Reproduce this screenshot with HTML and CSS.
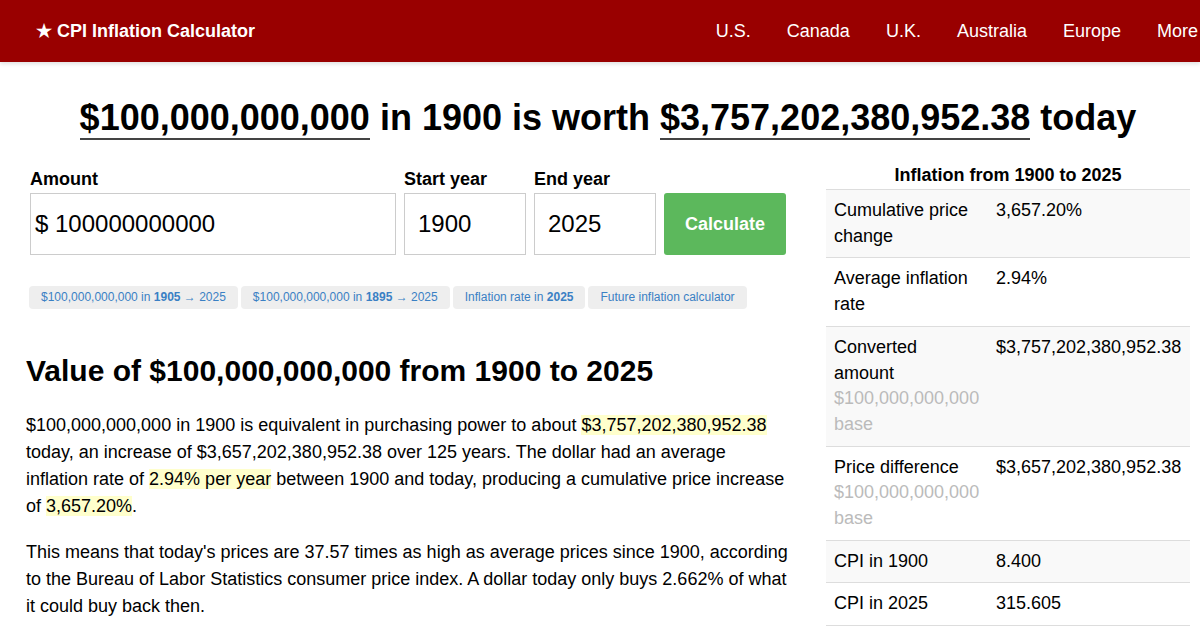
FILE: index.html
```html
<!DOCTYPE html>
<html lang="en">
<head>
<meta charset="utf-8">
<title>CPI Inflation Calculator</title>
<link rel="stylesheet" href="styles.css">
</head>
<body>
<header class="topbar">
  <a class="brand" href="#">★ CPI Inflation Calculator</a>
  <nav class="nav">
    <a href="#">U.S.</a>
    <a href="#">Canada</a>
    <a href="#">U.K.</a>
    <a href="#">Australia</a>
    <a href="#">Europe</a>
    <a href="#">More</a>
  </nav>
</header>

<h1 class="headline"><span class="ul">$100,000,000,000</span> in 1900 is worth <span class="ul">$3,757,202,380,952.38</span> today</h1>

<div class="page">
  <main class="main">
    <form class="calc">
      <div class="field field-amount">
        <label>Amount</label>
        <div class="box">$ 100000000000</div>
      </div>
      <div class="field field-year">
        <label>Start year</label>
        <div class="box">1900</div>
      </div>
      <div class="field field-year">
        <label>End year</label>
        <div class="box">2025</div>
      </div>
      <div class="field field-btn">
        <label>&nbsp;</label>
        <button type="button" class="btn">Calculate</button>
      </div>
    </form>

    <div class="chips">
      <a class="chip" href="#">$100,000,000,000 in <b>1905</b> → 2025</a>
      <a class="chip" href="#">$100,000,000,000 in <b>1895</b> → 2025</a>
      <a class="chip" href="#">Inflation rate in <b>2025</b></a>
      <a class="chip" href="#">Future inflation calculator</a>
    </div>

    <h2 class="section-title">Value of $100,000,000,000 from 1900 to 2025</h2>
    <p class="text">$100,000,000,000 in 1900 is equivalent in purchasing power to about <span class="hl">$3,757,202,380,952.38</span> today, an increase of $3,657,202,380,952.38 over 125 years. The dollar had an average inflation rate of <span class="hl">2.94% per year</span> between 1900 and today, producing a cumulative price increase of <span class="hl">3,657.20%</span>.</p>
    <p class="text">This means that today's prices are 37.57 times as high as average prices since 1900, according to the Bureau of Labor Statistics consumer price index. A dollar today only buys 2.662% of what it could buy back then.</p>
  </main>

  <aside class="side">
    <table class="stats">
      <caption>Inflation from 1900 to 2025</caption>
      <tbody>
        <tr><td class="k">Cumulative price change</td><td class="v">3,657.20%</td></tr>
        <tr><td class="k">Average inflation rate</td><td class="v">2.94%</td></tr>
        <tr><td class="k">Converted amount <span class="muted">$100,000,000,000 base</span></td><td class="v">$3,757,202,380,952.38</td></tr>
        <tr><td class="k">Price difference <span class="muted">$100,000,000,000 base</span></td><td class="v">$3,657,202,380,952.38</td></tr>
        <tr><td class="k">CPI in 1900</td><td class="v">8.400</td></tr>
        <tr><td class="k">CPI in 2025</td><td class="v">315.605</td></tr>
      </tbody>
    </table>
  </aside>
</div>
</body>
</html>
```

FILE: styles.css
```css
* { box-sizing: border-box; }
html, body { margin: 0; padding: 0; background: #fff; }
body {
  font-family: "Liberation Sans", Arial, sans-serif;
  color: #000;
  overflow: hidden;
}
a { text-decoration: none; }

.topbar {
  height: 62px;
  background: #990000;
  display: flex;
  align-items: center;
  justify-content: space-between;
  padding: 0 2px 0 36px;
  box-shadow: 0 2px 4px rgba(0,0,0,0.12);
}
.brand {
  color: #fff;
  font-weight: bold;
  font-size: 18px;
}
.nav { display: flex; gap: 36px; }
.nav a { color: #fff; font-size: 18px; }

.headline {
  margin: 34px 0 0;
  padding-left: 16px;
  text-align: center;
  font-size: 36px;
  line-height: 43px;
  font-weight: bold;
}
.ul { border-bottom: 2px solid #444; }

.page {
  display: flex;
  gap: 36px;
  padding: 0 10px 0 26px;
}
.main { width: 764px; flex: none; }
.side { width: 364px; flex: none; padding-top: 25px; }

.calc {
  display: flex;
  gap: 8px;
  padding-left: 4px;
  margin-top: 29px;
}
.field { display: flex; flex-direction: column; }
.field label {
  font-weight: bold;
  font-size: 18px;
  line-height: 22px;
  margin-bottom: 3px;
}
.box {
  height: 62px;
  border: 1px solid #ccc;
  font-size: 24px;
  display: flex;
  align-items: center;
  padding: 0 13px;
}
.field-amount { width: 366px; }
.field-amount .box { padding-left: 4px; }
.field-year { width: 122px; }
.field-btn { width: 122px; }
.btn {
  height: 62px;
  border: none;
  border-radius: 3px;
  background: #5cb85c;
  color: #fff;
  font-family: inherit;
  font-weight: bold;
  font-size: 18px;
}

.chips {
  margin-top: 31px;
  padding-left: 3px;
  display: flex;
  gap: 3px;
}
.chip {
  background: #eee;
  border-radius: 4px;
  color: #3a80c4;
  font-size: 12px;
  line-height: 15px;
  padding: 4px 12px;
}
.chip b { font-weight: bold; }

.section-title {
  font-size: 30px;
  line-height: 36px;
  font-weight: bold;
  margin: 44px 0 0;
}
.text {
  font-size: 18px;
  line-height: 27px;
  margin: 23px 0 0;
}
.text + .text { margin-top: 19px; }
.hl { background: #ffffcc; }

.stats {
  width: 364px;
  border-collapse: collapse;
  table-layout: fixed;
  font-size: 18px;
  line-height: 1.42857;
}
.stats caption {
  font-weight: bold;
  font-size: 18px;
  line-height: 22px;
  padding-bottom: 3px;
}
.stats td {
  border-top: 1px solid #ddd;
  padding: 8px;
  vertical-align: top;
}
.stats tr:last-child td { border-bottom: 1px solid #ddd; }
.stats td.k { width: 162px; }
.stats tr:nth-child(odd) td { background: #f9f9f9; }
.muted { color: #bbb; }
```
